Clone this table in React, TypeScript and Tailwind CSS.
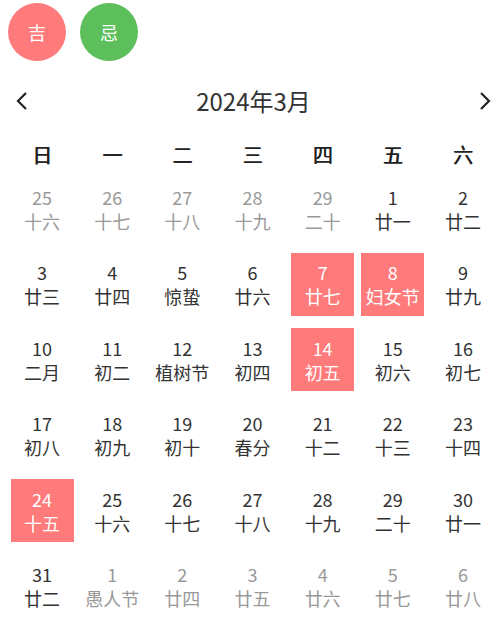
import React from "react";

type Cell = { d: string; l: string; g?: boolean; h?: boolean };

const rows: Cell[][] = [
  [
    { d: "25", l: "十六", g: true },
    { d: "26", l: "十七", g: true },
    { d: "27", l: "十八", g: true },
    { d: "28", l: "十九", g: true },
    { d: "29", l: "二十", g: true },
    { d: "1", l: "廿一" },
    { d: "2", l: "廿二" },
  ],
  [
    { d: "3", l: "廿三" },
    { d: "4", l: "廿四" },
    { d: "5", l: "惊蛰" },
    { d: "6", l: "廿六" },
    { d: "7", l: "廿七", h: true },
    { d: "8", l: "妇女节", h: true },
    { d: "9", l: "廿九" },
  ],
  [
    { d: "10", l: "二月" },
    { d: "11", l: "初二" },
    { d: "12", l: "植树节" },
    { d: "13", l: "初四" },
    { d: "14", l: "初五", h: true },
    { d: "15", l: "初六" },
    { d: "16", l: "初七" },
  ],
  [
    { d: "17", l: "初八" },
    { d: "18", l: "初九" },
    { d: "19", l: "初十" },
    { d: "20", l: "春分" },
    { d: "21", l: "十二" },
    { d: "22", l: "十三" },
    { d: "23", l: "十四" },
  ],
  [
    { d: "24", l: "十五", h: true },
    { d: "25", l: "十六" },
    { d: "26", l: "十七" },
    { d: "27", l: "十八" },
    { d: "28", l: "十九" },
    { d: "29", l: "二十" },
    { d: "30", l: "廿一" },
  ],
  [
    { d: "31", l: "廿二" },
    { d: "1", l: "愚人节", g: true },
    { d: "2", l: "廿四", g: true },
    { d: "3", l: "廿五", g: true },
    { d: "4", l: "廿六", g: true },
    { d: "5", l: "廿七", g: true },
    { d: "6", l: "廿八", g: true },
  ],
];

const weeks = ["日", "一", "二", "三", "四", "五", "六"];

export default function App() {
  return (
    <div
      className="w-[500px] h-[624px] bg-white text-[#333] overflow-hidden"
      style={{ fontFamily: '"Noto Sans CJK SC", sans-serif' }}
    >
      <div className="flex gap-[14px] pl-[8px] pt-[3px]">
        <div className="w-[58px] h-[58px] rounded-full bg-[#ff7a7a] text-white flex items-center justify-center text-[18px]">
          吉
        </div>
        <div className="w-[58px] h-[58px] rounded-full bg-[#5cbf5c] text-white flex items-center justify-center text-[18px]">
          忌
        </div>
      </div>

      <div className="mt-[20px] h-[40px] flex items-center pl-[16px] pr-[9px]">
        <div className="flex-1 flex items-center">
          <svg width="12" height="20" viewBox="0 0 12 20">
            <path d="M10 2 L2 10 L10 18" fill="none" stroke="#222" strokeWidth="2.2" />
          </svg>
        </div>
        <div className="text-[24px] text-[#333]">2024年3月</div>
        <div className="flex-1 flex items-center justify-end">
          <svg width="12" height="20" viewBox="0 0 12 20">
            <path d="M2 2 L10 10 L2 18" fill="none" stroke="#222" strokeWidth="2.2" />
          </svg>
        </div>
      </div>

      <div className="mt-[12px] ml-[7px] w-[491px] grid grid-cols-7 h-[44px] items-center">
        {weeks.map((w) => (
          <div
            key={w}
            className="text-center text-[20px] font-normal text-[#222] [text-shadow:0.7px_0_0_#222]"
          >
            {w}
          </div>
        ))}
      </div>

      <div className="ml-[7px] w-[491px] grid grid-cols-7 gap-y-[12.6px]">
        {rows.flat().map((c, i) => (
          <div key={i} className="flex justify-center">
            <div
              className={
                "w-[63px] h-[63px] flex flex-col items-center justify-center text-[18px] leading-[24px] " +
                (c.h ? "bg-[#ff7a7a] text-white" : c.g ? "text-[#999]" : "text-[#333]")
              }
            >
              <div>{c.d}</div>
              <div className="whitespace-nowrap">{c.l}</div>
            </div>
          </div>
        ))}
      </div>
    </div>
  );
}
